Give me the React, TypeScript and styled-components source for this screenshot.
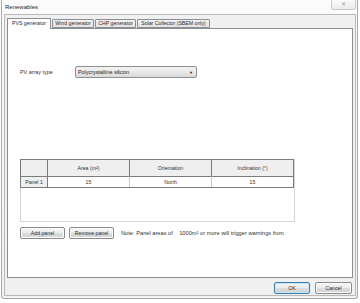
import { Fragment } from 'react'
import styled, { createGlobalStyle } from 'styled-components'

const Global = createGlobalStyle`
  html, body {
    margin: 0;
    padding: 0;
    background: #ffffff;
  }
  body {
    font-family: "Liberation Sans", Arial, sans-serif;
    font-size: 6px;
    color: #333;
  }
`

const tabs = [
  { label: 'PVS generator', w: 44 },
  { label: 'Wind generator', w: 42 },
  { label: 'CHP generator', w: 41 },
  { label: 'Solar Collector (SBEM only)', w: 73 },
]

const columns = ['Area (m²)', 'Orientation', 'Inclination (°)']
const rows = [{ name: 'Panel 1', values: ['15', 'North', '15'] }]

const App = () => {
  return (
    <Page>
      <Global />
      <Window>
        <TitleBar>
          <Title>Renewables</Title>
          <CloseButton>✕</CloseButton>
        </TitleBar>
        <Client>
          <TabRow>
            {tabs.map((t, i) => (
              <Tab key={t.label} $w={t.w} $active={i === 0}>{t.label}</Tab>
            ))}
          </TabRow>
          <TabPanel>
            <FieldRow>
              <FieldLabel>PV array type</FieldLabel>
              <Select>
                <span>Polycrystalline silicon</span>
                <Arrow>▼</Arrow>
              </Select>
            </FieldRow>

            <TableBox>
              <Grid>
                <HeadCell />
                {columns.map(c => (
                  <HeadCell key={c}>{c}</HeadCell>
                ))}
                {rows.map(r => (
                  <Fragment key={r.name}>
                    <HeadCell>{r.name}</HeadCell>
                    {r.values.map((v, i) => (
                      <Cell key={i} $first={i === 0}>{v}</Cell>
                    ))}
                  </Fragment>
                ))}
              </Grid>
            </TableBox>

            <ActionRow>
              <Button $w={45}>Add panel</Button>
              <Button $w={45}>Remove panel</Button>
              <Note>Note: Panel areas of&nbsp;&nbsp;&nbsp; 1000m² or more will trigger warnings from</Note>
            </ActionRow>
          </TabPanel>
          <Footer>
            <Button $w={36} $default>OK</Button>
            <Button $w={37}>Cancel</Button>
          </Footer>
        </Client>
      </Window>
    </Page>
  )
}

const Page = styled.div`
  width: 360px;
  height: 303px;
  padding: 0 0 0 1px;
  box-sizing: border-box;
  background: #ffffff;
`

const Window = styled.div`
  width: 357px;
  height: 299px;
  box-sizing: border-box;
  border: 1px solid #a9a9a9;
  border-top: none;
  border-radius: 0 0 3px 3px;
  background: linear-gradient(180deg, #fbfbfb 0%, #f3f3f3 100%);
  display: flex;
  flex-direction: column;
`

const TitleBar = styled.div`
  height: 14px;
  display: flex;
  justify-content: space-between;
  align-items: flex-start;
  padding-left: 3px;
`

const Title = styled.div`
  margin-top: 4px;
  font-size: 6px;
  color: #2a2a2a;
`

const CloseButton = styled.div`
  width: 25px;
  height: 10px;
  margin-right: 1px;
  box-sizing: border-box;
  border: 1px solid #c9c9c9;
  border-top: none;
  border-radius: 0 0 3px 3px;
  background: linear-gradient(180deg, #fafafa, #ececec);
  color: #a0a0a0;
  font-size: 6px;
  line-height: 9px;
  text-align: center;
`

const Client = styled.div`
  flex: 1;
  margin: 0 1px 2px 2px;
  border: 1px solid #b9b9b9;
  background: #f0f0f0;
  display: flex;
  flex-direction: column;
  padding: 3px 2px 0 2px;
`

const TabRow = styled.div`
  display: flex;
  align-items: flex-end;
  height: 10px;
  position: relative;
  z-index: 1;
`

const Tab = styled.div<{ $active?: boolean; $w: number }>`
  box-sizing: border-box;
  width: ${p => p.$w}px;
  height: ${p => (p.$active ? 11 : 9)}px;
  margin-bottom: ${p => (p.$active ? -1 : 0)}px;
  margin-right: 1px;
  border: 1px solid #8c8e94;
  border-bottom: ${p => (p.$active ? 'none' : '1px solid #8c8e94')};
  border-radius: 1px 1px 0 0;
  background: ${p => (p.$active ? '#ffffff' : 'linear-gradient(180deg, #f2f2f2, #e3e3e3)')};
  font-size: 5.2px;
  line-height: ${p => (p.$active ? 9 : 7)}px;
  text-align: center;
  color: #2a2a2a;
  white-space: nowrap;
  overflow: hidden;
`

const TabPanel = styled.div`
  height: 250px;
  box-sizing: border-box;
  border: 1px solid #8c8e94;
  background: #ffffff;
  display: flex;
  flex-direction: column;
  padding: 37px 0 0 12px;
`

const FieldRow = styled.div`
  display: flex;
  align-items: center;
`

const FieldLabel = styled.div`
  width: 55px;
  font-size: 5.4px;
  color: #333;
`

const Select = styled.div`
  width: 122px;
  height: 12px;
  box-sizing: border-box;
  border: 1px solid #8f8f8f;
  border-radius: 2px;
  background: linear-gradient(180deg, #f3f3f3 0%, #e8e8e8 50%, #dadada 100%);
  display: flex;
  align-items: center;
  justify-content: space-between;
  padding: 0 3px 0 2px;
  font-size: 5.4px;
  color: #222;
`

const Arrow = styled.span`
  font-size: 4px;
  color: #222;
`

const TableBox = styled.div`
  margin-top: 81px;
  width: 275px;
  height: 63px;
  box-sizing: border-box;
  border: 1px solid #d4d4d4;
  background: #ffffff;
`

const Grid = styled.div`
  display: grid;
  grid-template-columns: 27px 82px 82px 82px;
  grid-template-rows: 17px 11px;
  border: 1px solid #7c7c7c;
  border-top: none;
  border-left: none;
  width: 274px;
  margin-top: -1px;
  margin-left: -1px;
  box-sizing: border-box;
  font-size: 5.2px;
  color: #333;
`

const HeadCell = styled.div`
  border-left: 1px solid #7c7c7c;
  border-top: 1px solid #7c7c7c;
  background: #efefef;
  display: flex;
  align-items: center;
  justify-content: center;
`

const Cell = styled.div<{ $first?: boolean }>`
  border-left: 1px solid ${p => (p.$first ? '#7c7c7c' : '#c8c8c8')};
  border-top: 1px solid #7c7c7c;
  display: flex;
  align-items: center;
  justify-content: center;
`

const ActionRow = styled.div`
  display: flex;
  align-items: center;
  gap: 4px;
  margin-top: 5px;
`

const Button = styled.div<{ $w: number; $default?: boolean }>`
  width: ${p => p.$w}px;
  height: 12px;
  box-sizing: border-box;
  border: 1px solid ${p => (p.$default ? '#3c7fb1' : '#8a8a8a')};
  border-radius: 2px;
  background: linear-gradient(180deg, #f7f7f7 0%, #ebebeb 50%, #dddddd 51%, #d2d2d2 100%);
  box-shadow: ${p => (p.$default ? 'inset 0 0 0 1px #bfe3f7' : 'inset 0 0 0 1px #fbfbfb')};
  font-size: 5.2px;
  color: #2a2a2a;
  display: flex;
  align-items: center;
  justify-content: center;
  white-space: nowrap;
`

const Note = styled.div`
  margin-left: 3px;
  font-size: 5.7px;
  color: #333;
  white-space: nowrap;
`

const Footer = styled.div`
  display: flex;
  justify-content: flex-end;
  gap: 5px;
  padding: 4px 1px 0 0;
`

export default App
